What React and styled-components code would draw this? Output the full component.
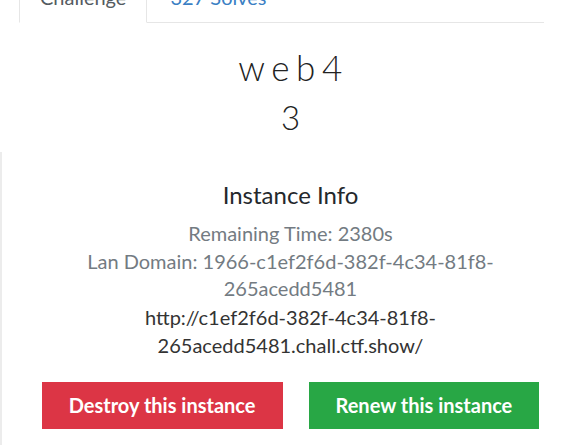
import React from "react";
import styled, { createGlobalStyle } from "styled-components";

const Global = createGlobalStyle`
  html, body { margin: 0; padding: 0; background: #fff; }
  body { font-family: Lato, "Open Sans", sans-serif; overflow: hidden; }
  #root { width: 574px; height: 445px; overflow: hidden; }
`;

const Page = styled.div`
  width: 581px;
  display: flex;
  flex-direction: column;
`;

const TabBar = styled.ul`
  list-style: none;
  margin: -29px 0 0 19px;
  padding: 0;
  width: 525px;
  display: flex;
  border-bottom: 1px solid #e6e6e6;
`;

const Tab = styled.li`
  margin-bottom: -1px;
  margin-right: ${(p) => (p.$active ? "2px" : "0")};
  padding: 10px 20px;
  font-size: 20px;
  line-height: 30px;
  color: ${(p) => (p.$active ? "#555b61" : "#3b7fc4")};
  border: 1px solid ${(p) => (p.$active ? "#e6e6e6" : "transparent")};
  border-bottom-color: ${(p) => (p.$active ? "#fff" : "transparent")};
  background: ${(p) => (p.$active ? "#fff" : "transparent")};
`;

const Header = styled.div`
  display: flex;
  flex-direction: column;
  align-items: center;
`;

const Title = styled.h2`
  margin: 23px 0 0;
  font-family: Lato, sans-serif;
  font-weight: 300;
  font-size: 35px;
  line-height: 1.2;
  letter-spacing: 6.5px;
  padding-left: 6px;
  color: #222;
`;

const Value = styled.h3`
  margin: 10px 0 0;
  font-weight: 300;
  font-size: 33px;
  line-height: 1.2;
  color: #222;
`;

const Panel = styled.section`
  margin-top: 14px;
  border-left: 2px solid #ececec;
  padding: 29px 0 40px 39px;
  width: 499px;
  display: flex;
  flex-direction: column;
  align-items: center;
  text-align: center;
`;

const InfoTitle = styled.h4`
  margin: 0;
  font-weight: 400;
  font-size: 24px;
  line-height: 1.2;
  color: #24282c;
`;

const Meta = styled.div`
  margin-top: 11px;
  font-size: 20px;
  line-height: 27.5px;
  color: #737b82;
`;

const Url = styled.div`
  max-width: 300px;
  font-size: 20px;
  line-height: 28px;
  color: #333;
  word-break: break-word;
`;

const Actions = styled.div`
  margin-top: 23px;
  display: flex;
  gap: 26px;
  justify-content: center;
`;

const Button = styled.button`
  font-family: Lato, sans-serif;
  font-weight: 700;
  font-size: 20px;
  line-height: 31px;
  padding: 8px 27px;
  border: none;
  border-radius: 0;
  color: #fff;
  background: ${(p) => (p.$variant === "danger" ? "#dc3545" : "#28a745")};
  cursor: pointer;
`;

export default function App() {
  return (
    <>
      <Global />
      <Page>
        <TabBar>
          <Tab $active>Challenge</Tab>
          <Tab>327 Solves</Tab>
        </TabBar>
        <Header>
          <Title>web4</Title>
          <Value>3</Value>
        </Header>
        <Panel>
          <InfoTitle>Instance Info</InfoTitle>
          <Meta>
            Remaining Time: 2380s
            <br />
            Lan Domain: 1966-c1ef2f6d-382f-4c34-81f8-265acedd5481
          </Meta>
          <Url>http://c1ef2f6d-382f-4c34-81f8-265acedd5481.chall.ctf.show/</Url>
          <Actions>
            <Button $variant="danger">Destroy this instance</Button>
            <Button $variant="success">Renew this instance</Button>
          </Actions>
        </Panel>
      </Page>
    </>
  );
}
